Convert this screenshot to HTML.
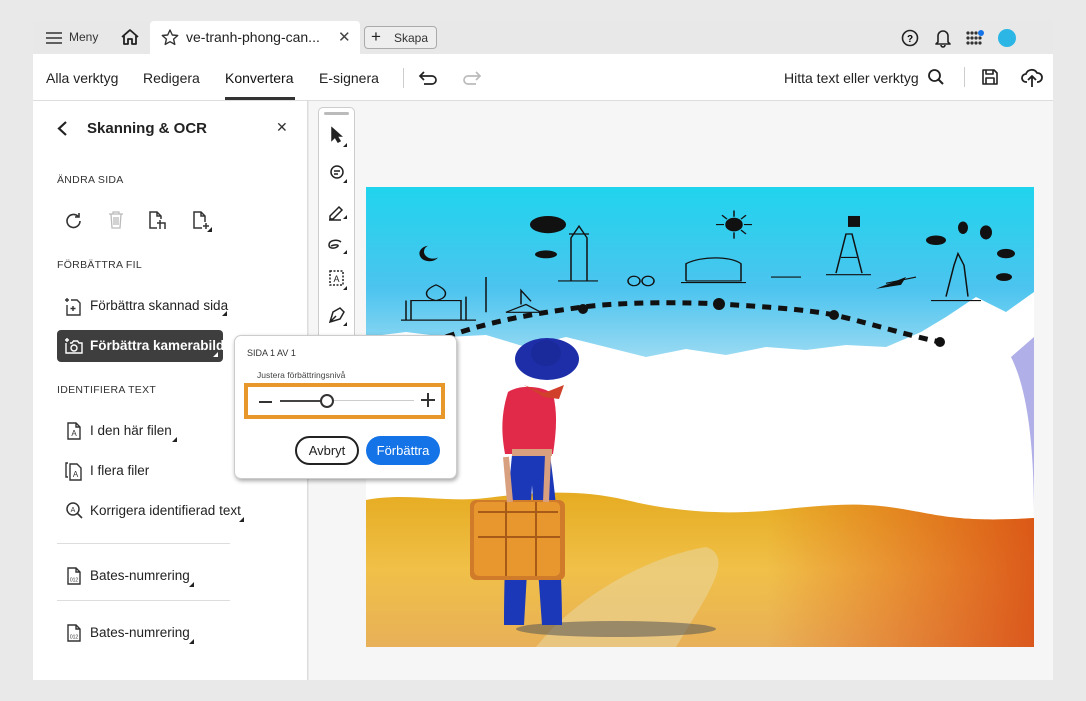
<!DOCTYPE html>
<html><head><meta charset="utf-8"><style>
*{box-sizing:border-box;margin:0;padding:0}
body{width:1086px;height:701px;background:#e9e9e9;font-family:"Liberation Sans",sans-serif;position:relative;overflow:hidden;color:#222}
.abs{position:absolute}
#tabbar{left:33px;top:21px;width:1020px;height:33px;background:#e8e8e8}
#toolbar{left:33px;top:54px;width:1020px;height:47px;background:#fff;border-bottom:1px solid #ddd}
#left{left:33px;top:101px;width:275px;height:579px;background:#fff;border-right:1px solid #ddd}
#canvas{left:309px;top:101px;width:744px;height:579px;background:#f6f6f6}
.sec{font-family:"Liberation Sans",sans-serif;font-size:10.5px;letter-spacing:.3px;color:#333}
.item{font-size:13.5px;color:#222;font-family:"Liberation Sans",sans-serif}
.tri{position:absolute;width:0;height:0;border-left:5px solid transparent;border-bottom:5px solid #222}
</style></head><body>
<div id="tabbar" class="abs"></div>
<svg class="abs" style="left:46px;top:31px" width="16" height="14"><path d="M0 2h16M0 7h16M0 12h16" stroke="#333" stroke-width="1.6"/></svg>
<div class="abs" style="left:69px;top:30px;font-size:12px;color:#333">Meny</div>
<svg class="abs" style="left:120px;top:28px" width="20" height="18" viewBox="0 0 20 18"><path d="M2 9L10 2l8 7M4 7.5V16h4v-5h4v5h4V7.5" fill="none" stroke="#222" stroke-width="1.8" stroke-linejoin="round"/></svg>
<div class="abs" style="left:150px;top:21px;width:210px;height:33px;background:#fff;border-radius:4px 4px 0 0"></div>
<svg class="abs" style="left:161px;top:29px" width="18" height="17" viewBox="0 0 18 17"><path d="M9 1l2.3 5 5.4.5-4.1 3.6 1.2 5.3L9 12.7 4.2 15.4l1.2-5.3L1.3 6.5 6.7 6z" fill="none" stroke="#333" stroke-width="1.4" stroke-linejoin="round"/></svg>
<div class="abs" style="left:186px;top:29px;font-size:14px;color:#222">ve-tranh-phong-can...</div>
<div class="abs" style="left:338px;top:28px;font-size:15px;color:#444">✕</div>
<div class="abs" style="left:364px;top:26px;width:73px;height:23px;border:1px solid #aaa;border-radius:4px;background:#eee"></div>
<div class="abs" style="left:371px;top:27px;font-size:17px;color:#222">+</div>
<div class="abs" style="left:394px;top:31px;font-size:12px;color:#333">Skapa</div>
<svg class="abs" style="left:901px;top:29px" width="18" height="18"><circle cx="9" cy="9" r="7.5" fill="none" stroke="#222" stroke-width="1.6"/><text x="9" y="13" font-size="10" font-weight="bold" text-anchor="middle" font-family="Liberation Sans">?</text></svg>
<svg class="abs" style="left:934px;top:28px" width="18" height="20"><path d="M4 14V8a5 5 0 0 1 10 0v6l2 2H2z M7 17a2 2 0 0 0 4 0" fill="none" stroke="#222" stroke-width="1.6" stroke-linejoin="round"/></svg>
<svg class="abs" style="left:966px;top:30px" width="20" height="16"><g fill="#333"><circle cx="2" cy="3" r="1.6"/><circle cx="6" cy="3" r="1.6"/><circle cx="10" cy="3" r="1.6"/><circle cx="2" cy="8" r="1.6"/><circle cx="6" cy="8" r="1.6"/><circle cx="10" cy="8" r="1.6"/><circle cx="14" cy="8" r="1.6"/><circle cx="2" cy="13" r="1.6"/><circle cx="6" cy="13" r="1.6"/><circle cx="10" cy="13" r="1.6"/><circle cx="14" cy="13" r="1.6"/></g><circle cx="15" cy="3" r="3" fill="#1473e6"/></svg>
<div class="abs" style="left:998px;top:29px;width:18px;height:18px;border-radius:50%;background:#2bb6e6"></div>

<div id="toolbar" class="abs"></div>
<div class="abs" style="left:46px;top:70px;font-size:14px;color:#222">Alla verktyg</div>
<div class="abs" style="left:143px;top:70px;font-size:14px;color:#222">Redigera</div>
<div class="abs" style="left:225px;top:70px;font-size:14px;color:#111">Konvertera</div>
<div class="abs" style="left:225px;top:97px;width:70px;height:3px;background:#333"></div>
<div class="abs" style="left:319px;top:70px;font-size:14px;color:#222">E-signera</div>
<div class="abs" style="left:403px;top:68px;width:1px;height:20px;background:#ccc"></div>
<svg class="abs" style="left:418px;top:70px" width="22" height="16"><path d="M6 2L2 6l4 4M2 6h12a4 4 0 0 1 0 8H6" fill="none" stroke="#222" stroke-width="1.7"/></svg>
<svg class="abs" style="left:460px;top:70px" width="22" height="16"><path d="M16 2l4 4-4 4M20 6H8a4 4 0 0 0 0 8h8" fill="none" stroke="#bbb" stroke-width="1.7"/></svg>
<div class="abs" style="left:784px;top:70px;font-size:14px;color:#222">Hitta text eller verktyg</div>
<svg class="abs" style="left:927px;top:68px" width="18" height="18"><circle cx="7.5" cy="7.5" r="5.5" fill="none" stroke="#222" stroke-width="1.8"/><path d="M11.5 11.5L16 16" stroke="#222" stroke-width="2"/></svg>
<div class="abs" style="left:964px;top:67px;width:1px;height:20px;background:#ccc"></div>
<svg class="abs" style="left:981px;top:68px" width="18" height="18"><path d="M2 2h11l3 3v11H2z M5 2v4h7V2 M5 16v-6h8v6" fill="none" stroke="#222" stroke-width="1.6" stroke-linejoin="round"/></svg>
<svg class="abs" style="left:1021px;top:67px" width="22" height="22"><path d="M6 15H5a4 4 0 0 1 0-8 6 6 0 0 1 11-1 4.5 4.5 0 0 1 1 9h-1 M11 20V9 M7 13l4-4 4 4" fill="none" stroke="#222" stroke-width="1.8" stroke-linejoin="round"/></svg>

<div id="left" class="abs"></div>
<svg class="abs" style="left:56px;top:120px" width="12" height="17"><path d="M10 2L3 8.5l7 6.5" fill="none" stroke="#222" stroke-width="2.2"/></svg>
<div class="abs" style="left:87px;top:120px;font-size:15px;font-weight:bold;color:#222">Skanning &amp; OCR</div>
<div class="abs" style="left:276px;top:119px;font-size:14px;color:#333">✕</div>
<div class="abs sec" style="left:57px;top:174px">ÄNDRA SIDA</div>
<svg class="abs" style="left:64px;top:211px" width="20" height="20"><path d="M16 10a6.5 6.5 0 1 1-2-4.7 M15 2v4h-4" fill="none" stroke="#333" stroke-width="1.6"/></svg>
<svg class="abs" style="left:107px;top:210px" width="18" height="20"><path d="M2 4h14M6 4V2h6v2M4 4l1 14h8l1-14M7 7v8M9 7v8M11 7v8" fill="none" stroke="#bbb" stroke-width="1.3"/></svg>
<svg class="abs" style="left:148px;top:210px" width="20" height="22"><path d="M9 18H2V2h7l4 4v3 M9 2v4h4 M12 10v9M9 13h8v6" fill="none" stroke="#333" stroke-width="1.5"/></svg>
<svg class="abs" style="left:192px;top:210px" width="22" height="22"><path d="M10 18H2V2h7l4 4v6 M9 2v4h4 M14 13v6M11 16h6" fill="none" stroke="#333" stroke-width="1.5"/></svg>
<div class="tri" style="left:207px;top:227px"></div>
<div class="abs sec" style="left:57px;top:259px">FÖRBÄTTRA FIL</div>
<svg class="abs" style="left:64px;top:297px" width="18" height="20"><path d="M7 3h6l3 3v12H3V8 M3 1v4M1 3h4 M9 9v5M6.5 11.5h5" fill="none" stroke="#333" stroke-width="1.4"/></svg>
<div class="abs item" style="left:90px;top:298px">Förbättra skannad sida</div>
<div class="tri" style="left:222px;top:311px"></div>
<div class="abs" style="left:57px;top:330px;width:166px;height:32px;background:#3e3e3e;border-radius:4px"></div>
<svg class="abs" style="left:64px;top:337px" width="20" height="18"><path d="M6 6h2l1.5-2h4L15 6h3v10H2V6 M3 1v4M1 3h4" fill="none" stroke="#fff" stroke-width="1.4"/><circle cx="10" cy="11" r="3" fill="none" stroke="#fff" stroke-width="1.4"/></svg>
<div class="abs item" style="left:90px;top:338px;color:#fff;font-weight:bold">Förbättra kamerabild</div>
<div class="tri" style="left:213px;top:352px;border-bottom-color:#fff"></div>
<div class="abs sec" style="left:57px;top:384px">IDENTIFIERA TEXT</div>
<svg class="abs" style="left:66px;top:421px" width="16" height="20"><path d="M2 2h8l4 4v12H2z M10 2v4h4" fill="none" stroke="#333" stroke-width="1.4"/><text x="8" y="15" font-size="8" text-anchor="middle" font-family="Liberation Sans" fill="#333">A</text></svg>
<div class="abs item" style="left:90px;top:423px">I den här filen</div>
<div class="tri" style="left:172px;top:437px"></div>
<svg class="abs" style="left:64px;top:461px" width="20" height="20"><path d="M4 2H2v14h2 M6 3h7l4 4v12H6z" fill="none" stroke="#333" stroke-width="1.4"/><text x="11.5" y="16" font-size="8" text-anchor="middle" font-family="Liberation Sans" fill="#333">A</text></svg>
<div class="abs item" style="left:90px;top:463px">I flera filer</div>
<svg class="abs" style="left:65px;top:501px" width="19" height="19"><circle cx="8" cy="8" r="6" fill="none" stroke="#333" stroke-width="1.5"/><path d="M12.5 12.5L17 17" stroke="#333" stroke-width="1.6"/><text x="8" y="11" font-size="7" text-anchor="middle" font-family="Liberation Sans" fill="#333">A</text></svg>
<div class="abs item" style="left:90px;top:503px">Korrigera identifierad text</div>
<div class="tri" style="left:239px;top:517px"></div>
<div class="abs" style="left:57px;top:543px;width:173px;height:1px;background:#ddd"></div>
<svg class="abs" style="left:66px;top:566px" width="16" height="20"><path d="M2 2h8l4 4v12H2z M10 2v4h4" fill="none" stroke="#333" stroke-width="1.4"/><text x="8" y="15.5" font-size="5" text-anchor="middle" font-family="Liberation Sans" fill="#333">012</text></svg>
<div class="abs item" style="left:90px;top:568px">Bates-numrering</div>
<div class="tri" style="left:189px;top:582px"></div>
<div class="abs" style="left:57px;top:600px;width:173px;height:1px;background:#ddd"></div>
<svg class="abs" style="left:66px;top:623px" width="16" height="20"><path d="M2 2h8l4 4v12H2z M10 2v4h4" fill="none" stroke="#333" stroke-width="1.4"/><text x="8" y="15.5" font-size="5" text-anchor="middle" font-family="Liberation Sans" fill="#333">012</text></svg>
<div class="abs item" style="left:90px;top:625px">Bates-numrering</div>
<div class="tri" style="left:189px;top:639px"></div>

<div id="canvas" class="abs"></div>
<div class="abs" style="left:318px;top:107px;width:37px;height:240px;background:#fff;border:1px solid #ccc;border-radius:5px"></div>
<div class="abs" style="left:324px;top:112px;width:25px;height:3px;background:#bbb;border-radius:2px"></div>
<svg class="abs" style="left:326px;top:124px" width="24" height="210" fill="none" stroke="#222" stroke-width="1.5">
<path d="M6 4l0 12 3-3 3 5 2-1-3-5h4z" fill="#222"/>
<circle cx="11" cy="48" r="6"/><path d="M8 47h6M8 50h4"/>
<path d="M4 92l9-9 3 3-9 9H4z M3 96h12"/>
<path d="M15 118c-4-3-12-2-12 3s8 3 9 1-5-1-7 0"/>
<rect x="4" y="147" width="13" height="14" stroke-dasharray="2 1.5"/><text x="10.5" y="158" font-size="9" fill="#222" stroke="none" text-anchor="middle" font-family="Liberation Sans">A</text>
<path d="M4 198l3-10 7-4 4 4-4 7-10 3z M4 198l6-6"/>
</svg>
<div class="tri" style="left:343px;top:143px;border-left-width:4px;border-bottom-width:4px"></div>
<div class="tri" style="left:343px;top:179px;border-left-width:4px;border-bottom-width:4px"></div>
<div class="tri" style="left:343px;top:215px;border-left-width:4px;border-bottom-width:4px"></div>
<div class="tri" style="left:343px;top:250px;border-left-width:4px;border-bottom-width:4px"></div>
<div class="tri" style="left:343px;top:286px;border-left-width:4px;border-bottom-width:4px"></div>
<div class="tri" style="left:343px;top:322px;border-left-width:4px;border-bottom-width:4px"></div>

<svg class="abs" style="left:366px;top:187px" width="668" height="460" viewBox="0 0 668 460">
<defs>
<linearGradient id="sky" x1="0" y1="0" x2="0" y2="1"><stop offset="0" stop-color="#20d4ee"/><stop offset=".6" stop-color="#4cc4ef"/><stop offset="1" stop-color="#9adaf2"/></linearGradient>
<linearGradient id="field" x1="0" y1="0" x2="0" y2="1"><stop offset="0" stop-color="#e6ac22"/><stop offset=".5" stop-color="#f0c048"/><stop offset="1" stop-color="#e8b058"/></linearGradient>
<linearGradient id="fr" x1="0" y1="0" x2="1" y2="0"><stop offset=".6" stop-color="#e05010" stop-opacity="0"/><stop offset="1" stop-color="#d84812" stop-opacity=".85"/></linearGradient>
</defs>
<rect width="668" height="460" fill="#fff"/>
<path d="M0 0H668V105L640 125 610 110 580 130 555 145 520 160 480 158 440 163 400 160 360 168 320 162 280 170 240 160 200 150 160 160 120 148 80 150 40 145 0 150z" fill="url(#sky)"/>
<path d="M645 170c15 30 23 80 23 160V150z" fill="#7b7ad8" opacity=".6"/>
<path d="M0 313c40-8 80 3 120-2s90-10 140 2 100 15 150 10 80-8 120-2 60 15 138 10V460H0z" fill="url(#field)"/>
<path d="M0 313c40-8 80 3 120-2s90-10 140 2 100 15 150 10 80-8 120-2 60 15 138 10V460H0z" fill="url(#fr)"/>
<path d="M170 460c40-50 110-90 170-100 30 10 0 50-30 100z" fill="#e9d49a" opacity=".6"/>
<ellipse cx="250" cy="442" rx="100" ry="8" fill="#555" opacity=".55"/>
<path d="M80 150C130 132 180 125 217 120S320 115 353 117 440 122 468 128 540 148 574 155" fill="none" stroke="#111" stroke-width="5" stroke-dasharray="9 7"/>
<circle cx="217" cy="122" r="5" fill="#111"/><circle cx="353" cy="117" r="6" fill="#111"/><circle cx="468" cy="128" r="5" fill="#111"/><circle cx="574" cy="155" r="5" fill="#111"/>
<g transform="scale(1,0.783)">
<g fill="none" stroke="#111" stroke-width="1.5">
<path d="M35 170h75M45 170v-25h50v25M70 145c-10-2-15-12 0-20 15 8 10 18 0 20M40 170v-25M100 170v-30M120 160v-45"/>
<path d="M140 160l20-10 15 10zM155 150v-18l10 14"/>
<path d="M205 120v-55l8-15 8 15v55M203 60h20M192 120h40"/>
<circle cx="268" cy="120" r="6"/><circle cx="282" cy="120" r="6"/>
<path d="M320 120v-22c15-10 45-10 55 0v22h-55M315 122h65"/>
<circle cx="368" cy="48" r="8" fill="#111"/><path d="M368 30v8M368 58v8M350 48h8M378 48h8M356 36l5 5M375 55l5 5M380 36l-5 5"/>
<path d="M405 115h30"/>
<path d="M470 110l10-50h6l10 50M475 90h16M460 112h45"/>
<path d="M580 140l8-40 4-15 6 15 4 40M565 145h50"/>
<path d="M520 123l30-8"/>
</g>
<g fill="#111"><ellipse cx="182" cy="48" rx="18" ry="11"/><ellipse cx="180" cy="86" rx="11" ry="5"/><ellipse cx="570" cy="68" rx="10" ry="6"/><ellipse cx="640" cy="85" rx="9" ry="6"/><ellipse cx="638" cy="115" rx="8" ry="5"/><ellipse cx="620" cy="58" rx="6" ry="9"/><ellipse cx="597" cy="52" rx="5" ry="8"/>
<path d="M62 75a10 10 0 1 0 10 15 8 8 0 0 1-10-15z"/><rect x="482" y="37" width="12" height="14"/><path d="M510 130l30-15-5 10z"/></g>
</g>
<path d="M146 268c-5 50-8 110-8 170h20l8-140 10 140h20c0-60-5-120-12-170z" fill="#1a38b8"/>
<path d="M142 205c-8 25-6 45-3 62h48c3-20 5-40 0-60-10-8-33-10-45-2z" fill="#e12a4a"/>
<path d="M146 262h40v7h-40z" fill="#d9a080"/>
<path d="M158 198l20 8 20-8-5 14-15-2z" fill="#d0402a"/>
<ellipse cx="181" cy="172" rx="32" ry="21" fill="#1e2ea8"/>
<ellipse cx="180" cy="166" rx="15" ry="13" fill="#1a2a9a"/>
<rect x="104" y="313" width="95" height="80" rx="6" fill="#d07b2a"/>
<rect x="108" y="315" width="86" height="74" rx="5" fill="#e8962e"/>
<path d="M112 325h80M112 350h82M140 315v74M170 315v74" stroke="#a85a18" stroke-width="2"/>
<path d="M140 270l4 45M182 268l-2 47" stroke="#d9a080" stroke-width="6"/>
</svg>

<div class="abs" style="left:234px;top:335px;width:223px;height:144px;background:#fff;border:1px solid #ccc;border-radius:7px;box-shadow:1px 2px 4px rgba(0,0,0,.35)"></div>
<div class="abs" style="left:247px;top:348px;font-size:9px;color:#333">SIDA 1 AV 1</div>
<div class="abs" style="left:257px;top:370px;font-size:8.5px;color:#444">Justera förbättringsnivå</div>
<div class="abs" style="left:244px;top:383px;width:201px;height:36px;border:4px solid #e8972a"></div>
<div class="abs" style="left:259px;top:401px;width:13px;height:1.5px;background:#333"></div>
<div class="abs" style="left:280px;top:400px;width:42px;height:2px;background:#444"></div>
<div class="abs" style="left:334px;top:400px;width:80px;height:1px;background:#ccc"></div>
<div class="abs" style="left:320px;top:394px;width:14px;height:14px;border:2px solid #333;border-radius:50%;background:#fff"></div>
<div class="abs" style="left:421px;top:393px;width:14px;height:14px"><div class="abs" style="left:0;top:6px;width:14px;height:1.5px;background:#333"></div><div class="abs" style="left:6px;top:0;width:1.5px;height:14px;background:#333"></div></div>
<div class="abs" style="left:295px;top:436px;width:64px;height:29px;border:2px solid #222;border-radius:15px;font-size:13px;text-align:center;line-height:25px;color:#222">Avbryt</div>
<div class="abs" style="left:366px;top:436px;width:74px;height:29px;background:#1473e6;border-radius:15px;font-size:13px;text-align:center;line-height:29px;color:#fff">Förbättra</div>
</body></html>
